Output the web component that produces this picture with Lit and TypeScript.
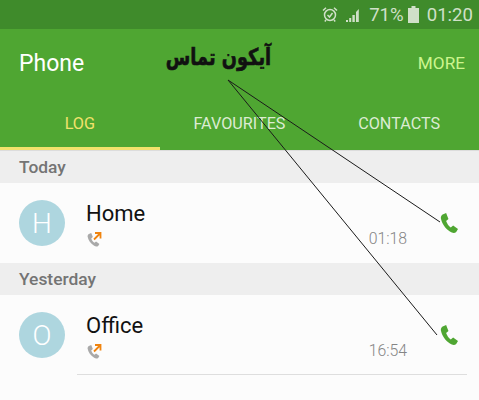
import { LitElement, css, html, svg } from "lit";
import { customElement } from "lit/decorators.js";

const handset = "M3 1.5 L6.8 0 L9.4 6 L6.8 8 C7.8 10.5 9.6 13 12 14.5 L14.6 12.4 L20 16 L18 19 C16 20.5 13.5 20 11 18.5 C6 15.5 2 10.5 1 5.5 C.7 3.8 1.5 2.3 3 1.5 Z";

@customElement("app-root")
export class AppRoot extends LitElement {
  static styles = css`
    :host {
      display: block;
      position: relative;
      width: 479px;
      height: 400px;
      overflow: hidden;
      background: #fcfcfc;
      font-family: Roboto, "Liberation Sans", sans-serif;
    }
    .status {
      height: 29px;
      background: #3f8b2b;
      color: #d0e0c8;
      display: flex;
      align-items: center;
      justify-content: flex-end;
      padding-right: 6px;
      font-size: 18.6px;
    }
    .status svg { display: block; }
    .alarm { margin-right: 8px; }
    .signal { margin-right: 8px; }
    .battery { margin: 0 8px 0 4px; }
    .header { background: #4fa632; height: 121px; display: flex; flex-direction: column; }
    .title {
      height: 68px;
      display: flex;
      align-items: center;
      justify-content: space-between;
      padding: 0 14px 0 19px;
      box-sizing: border-box;
    }
    .phone { color: #fff; font-size: 23px; }
    .more { color: #cdf58e; font-size: 17.2px; }
    .tabs { flex: 1; display: grid; grid-template-columns: repeat(3, 1fr); }
    .tab {
      color: #dcecd2;
      font-size: 16.2px;
      display: flex;
      align-items: flex-start;
      justify-content: center;
      padding-top: 17px;
      box-sizing: border-box;
    }
    .tab.on { color: #f2e26c; border-bottom: 3px solid #f2e26c; }
    .section {
      height: 32px;
      background: #eeeeee;
      color: #747474;
      font-size: 17.4px;
      font-weight: 500;
      display: flex;
      align-items: center;
      padding-left: 19px;
    }
    .header + .section { border-top: 1px solid #dcdcdc; box-sizing: border-box; height: 33px; }
    .row { height: 80px; display: flex; align-items: center; padding-left: 19px; position: relative; }
    .avatar {
      width: 46px;
      height: 46px;
      border-radius: 50%;
      background: #aed6df;
      color: #fff;
      font-size: 28px;
      font-weight: 300;
      display: flex;
      align-items: center;
      justify-content: center;
      flex: none;
    }
    .info { margin-left: 21px; padding-top: 2px; display: flex; flex-direction: column; gap: 4px; }
    .name { color: #111; font-size: 22px; line-height: 26px; }
    .info svg { display: block; }
    .side { margin-left: auto; align-self: stretch; display: flex; align-items: center; gap: 33px; padding-right: 21px; }
    .time { color: #858585; font-size: 15.8px; font-weight: 300; margin-top: 31px; }
    .call { display: block; }
    .divider { position: absolute; left: 77px; right: 12px; bottom: 0; height: 1px; background: #dedede; }
    .overlay { position: absolute; left: 0; top: 0; pointer-events: none; }
    .note {
      position: absolute;
      left: 165px;
      top: 40px;
      width: 107px;
      text-align: center;
      direction: rtl;
      white-space: nowrap;
      color: #111;
      font-family: "DejaVu Sans", sans-serif;
      font-weight: 700;
      font-size: 17.8px;
      line-height: 34px;
      -webkit-text-stroke: 0.5px #111;
      transform: scaleY(1.3);
    }
  `;

  private callIcon() {
    return html`<svg class="call" width="18" height="20" viewBox="0 0 20 20" preserveAspectRatio="none">
      <path d=${handset} fill="#4fa632"></path>
    </svg>`;
  }

  private outgoing() {
    return html`<svg width="20" height="16" viewBox="0 0 20 16">
      <g transform="translate(1 2) scale(.62 .68)"><path d=${handset} fill="#a9a9a9"></path></g>
      <path d="M8 8.5 L13.5 3 M9 2 H14.5 V7.5" fill="none" stroke="#f0840f" stroke-width="1.8"></path>
    </svg>`;
  }

  private row(letter: string, name: string, time: string, divider = false) {
    return html`<div class="row">
      <div class="avatar">${letter}</div>
      <div class="info"><div class="name">${name}</div>${this.outgoing()}</div>
      <div class="side"><span class="time">${time}</span>${this.callIcon()}</div>
      ${divider ? html`<div class="divider"></div>` : ""}
    </div>`;
  }

  render() {
    return html`
      <div class="status">
        <svg class="alarm" width="16" height="17" viewBox="0 0 16 16" fill="none" stroke="#d0e0c8" stroke-width="1.5">
          <circle cx="8" cy="8.5" r="5.5"></circle>
          <path d="M5.5 8.5 L7.5 10.5 L10.5 6.5 M1 4 L4 1.2 M15 4 L12 1.2 M4 13.5 L2.8 15 M12 13.5 L13.2 15"></path>
        </svg>
        <svg class="signal" width="15" height="14" viewBox="0 0 15 14" fill="#d0e0c8">
          <rect x="0" y="12" width="2" height="2"></rect>
          <rect x="3.2" y="10" width="2" height="4"></rect>
          <rect x="6.4" y="7" width="2.4" height="7"></rect>
          <path d="M10 4 L12.8 1 V14 H10 Z"></path>
        </svg>
        <span>71%</span>
        <svg class="battery" width="11" height="17" viewBox="0 0 11 17" fill="#d0e0c8">
          <rect x="3.5" y="0" width="4" height="2"></rect>
          <rect x="0" y="2" width="11" height="15"></rect>
        </svg>
        <span>01:20</span>
      </div>
      <div class="header">
        <div class="title"><span class="phone">Phone</span><span class="more">MORE</span></div>
        <div class="tabs">
          <div class="tab on">LOG</div>
          <div class="tab">FAVOURITES</div>
          <div class="tab">CONTACTS</div>
        </div>
      </div>
      <div class="section">Today</div>
      ${this.row("H", "Home", "01:18")}
      <div class="section">Yesterday</div>
      ${this.row("O", "Office", "16:54", true)}
      <svg class="overlay" width="479" height="400">
        ${svg`<path d="M228 80 L440 222 M228 80 L437 335" stroke="#1a1a1a" stroke-width="1" fill="none"></path>`}
      </svg>
      <div class="note">آیکون تماس</div>
    `;
  }
}
